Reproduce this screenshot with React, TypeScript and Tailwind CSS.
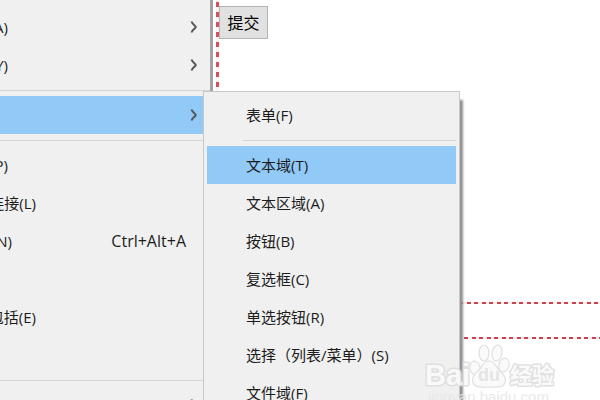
interface MenuEntry {
  label: string;
  labelWidth?: string;
  shortcut?: string;
  submenu?: boolean;
  active?: boolean;
}

const mainGroups: MenuEntry[][] = [
  [
    { label: '(A)', labelWidth: 'w-2', submenu: true },
    { label: '(Y)', labelWidth: 'w-2', submenu: true },
  ],
  [{ label: '', submenu: true, active: true }],
  [
    { label: '(P)', labelWidth: 'w-2' },
    { label: '连接(L)', labelWidth: 'w-9' },
    { label: '(N)', labelWidth: 'w-3', shortcut: 'Ctrl+Alt+A' },
    { label: '' },
    { label: '包括(E)', labelWidth: 'w-9' },
    { label: '' },
  ],
  [{ label: '', submenu: true }],
];

const formGroups: MenuEntry[][] = [
  [{ label: '表单(F)' }],
  [
    { label: '文本域(T)', active: true },
    { label: '文本区域(A)' },
    { label: '按钮(B)' },
    { label: '复选框(C)' },
    { label: '单选按钮(R)' },
    { label: '选择（列表/菜单）(S)' },
    { label: '文件域(F)' },
  ],
];

// two dashes per 15px tile
const dashTop =
  'bg-[repeating-linear-gradient(90deg,#fdf0f0_0_3px,#c8444c_3px_7px,#fdf0f0_7px_11px,#c8444c_11px_15px)]';
const dashBottom =
  'bg-[repeating-linear-gradient(90deg,#fdf0f0_0_1px,#c8444c_1px_5px,#fdf0f0_5px_8px,#c8444c_8px_12px,#fdf0f0_12px_15px)]';
const dashSide = 'bg-[repeating-linear-gradient(180deg,#fdf0f0_0_2px,#d9505c_2px_7px,#fdf0f0_7px_10px)]';

function Arrow() {
  return (
    <svg width="8" height="14" viewBox="0 0 8 14" fill="none" stroke="#555" strokeWidth="1.9">
      <path d="M1.5 1.5 C2 4 5.5 5.5 5.8 7 C5.5 8.5 2 10 1.5 12.5" />
    </svg>
  );
}

function MainMenu() {
  return (
    <nav className="absolute inset-y-0 left-0 w-[213px] overflow-hidden border-r-3 border-[#a3a3a3] bg-[#f0f0f0] pt-2">
      {mainGroups.map((group, i) => (
        <div key={i}>
          {i > 0 && (
            <div className="flex h-3 items-center">
              <hr className="w-full border-[#d4d4d4]" />
            </div>
          )}
          {group.map((entry, j) => (
            <button
              key={j}
              type="button"
              aria-label={entry.label || 'Menu item'}
              className={`flex h-[38px] w-full items-center justify-between pr-3 ${entry.active ? 'bg-[#91c9f7]' : ''}`}
            >
              <span className={`flex justify-end whitespace-nowrap ${entry.labelWidth ?? 'w-2'}`}>{entry.label}</span>
              {entry.shortcut && <span className="pr-3 text-base leading-5">{entry.shortcut}</span>}
              {entry.submenu && <Arrow />}
            </button>
          ))}
        </div>
      ))}
    </nav>
  );
}

function FormMenu() {
  return (
    <nav className="absolute top-[91px] left-[203px] w-[257px] border border-[#c8c8c8] bg-[#f0f0f0] px-[3px] pt-1 shadow-[4px_8px_2px_-1px_#929292]">
      {formGroups.map((group, i) => (
        <div key={i}>
          {i > 0 && (
            <div className="flex h-3 items-center pl-9">
              <hr className="w-full border-[#d4d4d4]" />
            </div>
          )}
          {group.map((entry) => (
            <button
              key={entry.label}
              type="button"
              className={`flex h-[38px] w-full items-center pl-[39px] whitespace-nowrap ${entry.active ? 'bg-[#91c9f7]' : ''}`}
            >
              {entry.label}
            </button>
          ))}
        </div>
      ))}
    </nav>
  );
}

function Watermark() {
  return (
    <div className="pointer-events-none absolute top-[343px] left-[424px] opacity-90">
      <svg width="136" height="57" viewBox="0 0 136 57" fill="#fafafa" stroke="#dedede" strokeWidth="1.2">
        <g strokeWidth="3" strokeLinejoin="round" paintOrder="stroke">
          <text x="1" y="42" fontFamily="Liberation Sans" fontWeight="bold" fontSize="29">Bai</text>
          <text x="86" y="40" fontFamily="Noto Sans CJK SC" fontWeight="bold" fontSize="22">经验</text>
        </g>
        <ellipse cx="51" cy="25" rx="5" ry="7" transform="rotate(-12 51 25)" />
        <ellipse cx="60" cy="10" rx="5" ry="8" />
        <ellipse cx="73" cy="10" rx="5" ry="8" transform="rotate(10 73 10)" />
        <ellipse cx="80" cy="22" rx="5" ry="7" transform="rotate(15 80 22)" />
        <path d="M65 18c-6 0-7 6-10 9-5 4-8 8-6 13 2 5 8 4 16 4s14 1 16-4c2-5-2-9-6-13-3-3-4-9-10-9z" />
        <text x="54" y="38" fontFamily="Liberation Sans" fontWeight="bold" fontSize="18" fill="#e2e2e2" stroke="none">du</text>
        <text x="4" y="59" fontFamily="Liberation Sans" fontSize="15" fill="#e8e8e8" stroke="none">jingyan.baidu.com</text>
      </svg>
    </div>
  );
}

export default function App() {
  return (
    <div className="relative h-screen overflow-hidden bg-white font-['Open_Sans','Noto_Sans_CJK_SC',sans-serif] text-[15px] leading-5 text-[#1c1c1c]">
      <main className="flex h-full flex-col pl-[216px]">
        <form className="flex h-[302px]">
          <div className={`w-[3px] ${dashSide}`} />
          <div className="pt-[6px]">
            <button type="button" className="h-[33px] w-[49px] border border-[#b4b4b4] bg-[#e1e1e1] text-base text-black">
              提交
            </button>
          </div>
        </form>
        <div className={`h-[2px] ${dashTop}`} />
        <div className="h-[33px]" />
        <div className={`h-[2px] ${dashBottom}`} />
      </main>
      <MainMenu />
      <FormMenu />
      <Watermark />
    </div>
  );
}
